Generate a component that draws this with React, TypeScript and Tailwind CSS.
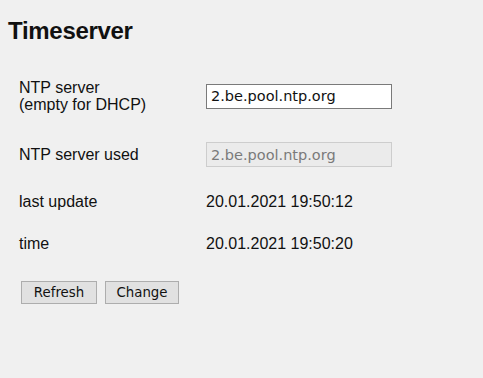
import React from "react";

export default function App() {
  return (
    <div className="w-[483px] h-[378px] bg-[#f0f0f0] text-[#111] font-['Liberation_Sans',Arial,sans-serif] overflow-hidden">
      <h1 className="pl-[8px] pt-[17px] text-[24px] leading-[28px] font-bold tracking-[-0.3px]">Timeserver</h1>
      <div className="pl-[19px] mt-[34px] text-[16px] leading-[17px]">
        <div className="grid grid-cols-[187px_186px] items-center">
          <div className="h-[34px] flex flex-col justify-center">
            <span>NTP server</span>
            <span>(empty for DHCP)</span>
          </div>
          <input
            readOnly
            value="2.be.pool.ntp.org"
            className="h-[25px] w-[186px] border border-[#7a7a7a] bg-white px-[4px] text-[14.5px] font-['DejaVu_Sans',sans-serif] text-[#111] outline-none"
          />
        </div>
        <div className="grid grid-cols-[187px_186px] items-center mt-[29px]">
          <div>NTP server used</div>
          <input
            disabled
            value="2.be.pool.ntp.org"
            className="h-[25px] w-[186px] border border-[#cdcdcd] bg-[#ebebeb] px-[4px] text-[14.5px] font-['DejaVu_Sans',sans-serif] text-[#7a7a7a] outline-none"
          />
        </div>
        <div className="grid grid-cols-[187px_186px] items-center mt-[26px]">
          <div>last update</div>
          <div>20.01.2021 19:50:12</div>
        </div>
        <div className="grid grid-cols-[187px_186px] items-center mt-[25px]">
          <div>time</div>
          <div>20.01.2021 19:50:20</div>
        </div>
        <div className="flex gap-[8px] mt-[29px] pl-[2px]">
          <button className="h-[23px] w-[76px] border border-[#adadad] bg-[#e1e1e1] text-[13.33px] font-['DejaVu_Sans',sans-serif] text-[#111]">Refresh</button>
          <button className="h-[23px] w-[74px] border border-[#adadad] bg-[#e1e1e1] text-[13.33px] font-['DejaVu_Sans',sans-serif] text-[#111]">Change</button>
        </div>
      </div>
    </div>
  );
}
